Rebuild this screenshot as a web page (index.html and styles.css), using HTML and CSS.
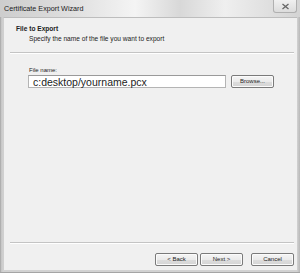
FILE: index.html
```html
<!DOCTYPE html>
<html>
<head>
<meta charset="utf-8">
<link rel="stylesheet" href="styles.css">
</head>
<body>
<div class="window">
  <div class="titlebar">
    <span class="title">Certificate Export Wizard</span>
    <span class="close"><svg width="9" height="7" viewBox="0 0 9 7"><path d="M1.5 1 L7.5 6 M7.5 1 L1.5 6" stroke="#666" stroke-width="1.3" fill="none"/></svg></span>
  </div>
  <div class="content">
    <div class="header">
      <div class="h-title">File to Export</div>
      <div class="h-sub">Specify the name of the file you want to export</div>
    </div>
    <div class="sep"></div>
    <div class="main">
      <div class="label">File name:</div>
      <div class="row">
        <div class="input">c:desktop/yourname.pcx</div>
        <div class="btn browse">Browse...</div>
      </div>
    </div>
    <div class="sep"></div>
    <div class="footer">
      <div class="btn">&lt; Back</div>
      <div class="btn">Next &gt;</div>
      <div class="btn cancel">Cancel</div>
    </div>
  </div>
</div>
</body>
</html>
```
FILE: styles.css
```css
html, body {
  margin: 0;
  padding: 0;
  background: #e8e8e8;
}
.window {
  width: 300px;
  height: 273px;
  box-sizing: border-box;
  display: flex;
  flex-direction: column;
  background: linear-gradient(90deg, #9a9a9a 0, #c4c4c4 1px, #d2d2d2 3px, #d2d2d2 297px, #b8b8b8 300px);
  border-bottom: 1px solid #a5a5a5;
  font-family: "Liberation Sans", Arial, sans-serif;
  color: #222;
  overflow: hidden;
}
.titlebar {
  height: 17px;
  flex: none;
  display: flex;
  align-items: flex-start;
  background: linear-gradient(90deg, #cdcdcd 0%, #e0e0e0 25%, #f4f4f4 45%, #d8d8d8 60%, #efefef 75%, #d4d4d4 100%);
}
.title {
  font-size: 7.2px;
  line-height: 8px;
  padding: 5px 0 0 4px;
  color: #1a1a1a;
}
.close {
  margin-left: auto;
  margin-right: 3px;
  width: 24px;
  height: 13px;
  box-sizing: border-box;
  border: 1px solid #b0b0b0;
  border-top: none;
  border-radius: 0 0 3px 3px;
  background: linear-gradient(#f0f0f0, #dcdcdc);
  display: flex;
  align-items: center;
  justify-content: center;
}
.content {
  flex: 1;
  display: flex;
  flex-direction: column;
  margin: 0 3px 2px 3px;
  background: #f0f0f0;
  border-top: 1px solid #bdbdbd;
  border-left: 1px solid #d0d0d0;
  box-sizing: border-box;
}
.header {
  height: 34px;
  flex: none;
  box-sizing: border-box;
  padding: 6px 0 0 12px;
}
.h-title {
  font-weight: bold;
  font-size: 6.6px;
  line-height: 10px;
}
.h-sub {
  font-size: 6.6px;
  line-height: 10px;
  padding-left: 13px;
}
.sep {
  flex: none;
  height: 0;
  margin: 0 3px 0 6px;
  border-top: 1px solid #c4c4c4;
  border-bottom: 1px solid #ffffff;
}
.main {
  flex: 1;
  box-sizing: border-box;
  padding: 12px 0 0 24px;
}
.label {
  font-size: 6px;
  line-height: 8px;
  padding-left: 1px;
}
.row {
  margin-top: 1px;
  display: flex;
  gap: 5px;
}
.input {
  width: 198px;
  height: 13px;
  box-sizing: border-box;
  background: #fff;
  border: 1px solid #b4b4b4;
  border-top-color: #9a9a9a;
  font-size: 10.5px;
  line-height: 12px;
  padding-left: 4px;
  color: #1c1c1c;
}
.btn {
  width: 43px;
  height: 13px;
  box-sizing: border-box;
  border: 1px solid #7a7a7a;
  border-radius: 2px;
  background: linear-gradient(#f5f5f5 0%, #ebebeb 50%, #dddddd 51%, #d4d4d4 100%);
  box-shadow: inset 0 0 0 1px #fbfbfb;
  font-size: 6px;
  line-height: 11px;
  text-align: center;
  color: #222;
}
.footer {
  height: 26px;
  flex: none;
  box-sizing: border-box;
  display: flex;
  justify-content: flex-end;
  gap: 2px;
  padding: 9px 3px 0 0;
}
.cancel {
  margin-left: 6px;
}
```
